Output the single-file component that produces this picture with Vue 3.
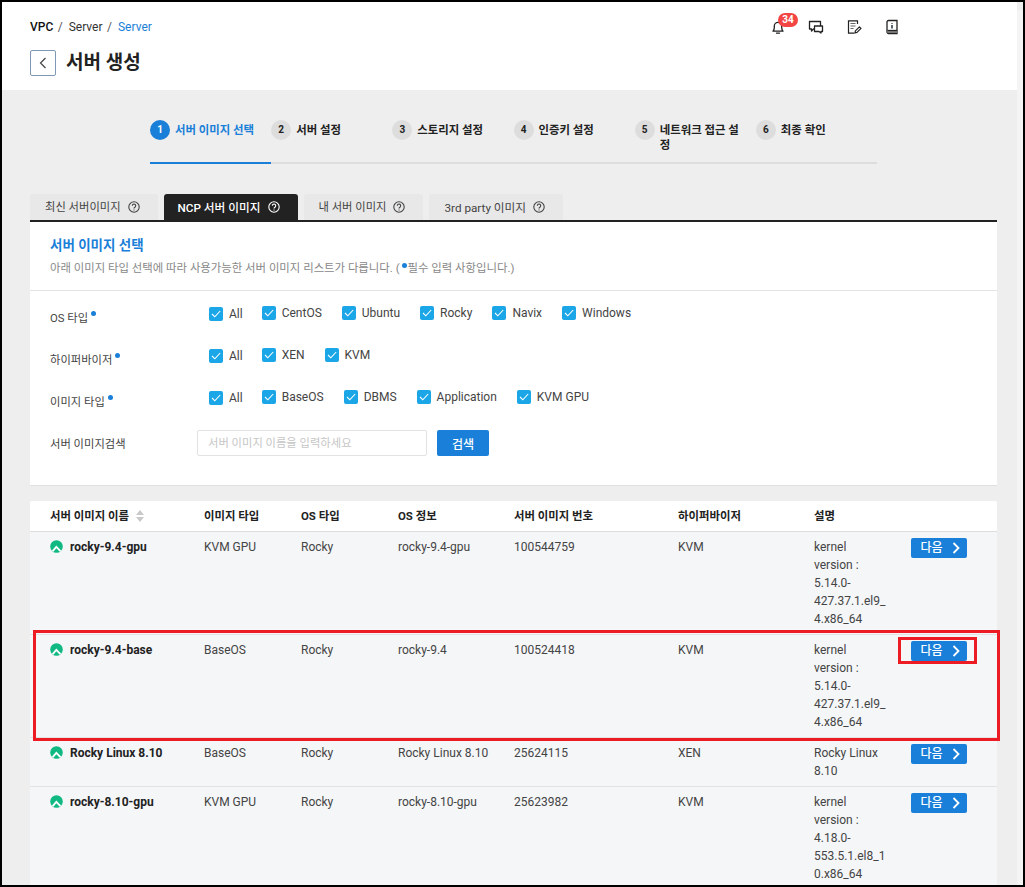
<script setup>
const steps = [
  { n: 1, label: '서버 이미지 선택', active: true },
  { n: 2, label: '서버 설정' },
  { n: 3, label: '스토리지 설정' },
  { n: 4, label: '인증키 설정' },
  { n: 5, label: '네트워크 접근 설정' },
  { n: 6, label: '최종 확인' }
]
const tabs = [
  { label: '최신 서버이미지' },
  { label: 'NCP 서버 이미지', active: true },
  { label: '내 서버 이미지' },
  { label: '3rd party 이미지', wide: true }
]
const filters = [
  { label: 'OS 타입', options: ['All', 'CentOS', 'Ubuntu', 'Rocky', 'Navix', 'Windows'] },
  { label: '하이퍼바이저', options: ['All', 'XEN', 'KVM'] },
  { label: '이미지 타입', options: ['All', 'BaseOS', 'DBMS', 'Application', 'KVM GPU'] }
]
const rows = [
  { name: 'rocky-9.4-gpu', type: 'KVM GPU', os: 'Rocky', info: 'rocky-9.4-gpu', no: '100544759', hv: 'KVM', desc: 'kernel version : 5.14.0-427.37.1.el9_4.x86_64' },
  { name: 'rocky-9.4-base', type: 'BaseOS', os: 'Rocky', info: 'rocky-9.4', no: '100524418', hv: 'KVM', desc: 'kernel version : 5.14.0-427.37.1.el9_4.x86_64' },
  { name: 'Rocky Linux 8.10', type: 'BaseOS', os: 'Rocky', info: 'Rocky Linux 8.10', no: '25624115', hv: 'XEN', desc: 'Rocky Linux 8.10' },
  { name: 'rocky-8.10-gpu', type: 'KVM GPU', os: 'Rocky', info: 'rocky-8.10-gpu', no: '25623982', hv: 'KVM', desc: 'kernel version : 4.18.0-553.5.1.el8_10.x86_64' }
]
</script>

<template>
  <div class="frame">
    <div class="main">
      <header class="top">
        <div class="top-row">
          <nav class="crumbs">
            <b>VPC</b><span class="sep">/</span><span>Server</span><span class="sep">/</span><span class="cur">Server</span>
          </nav>
          <div class="tools">
            <span class="tool bell">
              <svg width="16" height="16" viewBox="0 0 16 16" fill="none" stroke="#222" stroke-width="1.3">
                <path d="M3 12.2c1-1 1.3-2 1.3-3.7V7a3.7 3.7 0 0 1 7.4 0v1.500c0 1.700.3 2.700 1.300 3.700z" stroke-linejoin="round" />
                <path d="M6.500 14.200h3" stroke-linecap="round" />
              </svg>
              <span class="badge">34</span>
            </span>
            <span class="tool">
              <svg width="16" height="16" viewBox="0 0 16 16" fill="none" stroke="#222" stroke-width="1.300">
                <path d="M1.500 2.500h11v7.500H5.500L3.500 12v-2h-2z" stroke-linejoin="round" />
                <path d="M6.500 7h8v5.500h-1.500V14l-2-1.500H6.500z" fill="#fff" stroke-linejoin="round" />
              </svg>
            </span>
            <span class="tool">
              <svg width="16" height="16" viewBox="0 0 16 16" fill="none" stroke="#222" stroke-width="1.200">
                <path d="M11.500 5V1.800H2.500v12.400h6" />
                <path d="M4.500 4.500h5M4.500 7h5M4.500 9.500h3" stroke="#666" />
                <path d="M9 13.800l.4-2 4-4 1.600 1.600-4 4z" stroke-linejoin="round" />
              </svg>
            </span>
            <span class="tool">
              <svg width="16" height="16" viewBox="0 0 16 16" fill="none" stroke="#222" stroke-width="1.300">
                <path d="M3 12V3a1.500 1.500 0 0 1 1.500-1.500H13v13H4.500A1.500 1.500 0 0 1 3 13z" />
                <path d="M3.500 11.500H13" />
                <path d="M3.500 13h9.500" stroke="#777" stroke-width="2" />
                <path d="M8 4v.8M8 6v3.500" stroke="#123" stroke-width="1.400" />
              </svg>
            </span>
          </div>
        </div>
        <div class="title-row">
          <button class="back" type="button" aria-label="뒤로">
            <svg width="8" height="12" viewBox="0 0 8 12" fill="none" stroke="#444" stroke-width="1.200"><path d="M6.500 1L1.500 6l5 5" /></svg>
          </button>
          <h1>서버 생성</h1>
        </div>
      </header>

      <div class="content">
        <ol class="steps">
          <li v-for="s in steps" :key="s.n" class="step" :class="{ on: s.active }">
            <span class="num">{{ s.n }}</span>
            <span class="step-label">{{ s.label }}</span>
          </li>
        </ol>

        <div class="tabs">
          <div v-for="t in tabs" :key="t.label" class="tab" :class="{ on: t.active, wide: t.wide }">
            <span>{{ t.label }}</span>
            <svg width="12" height="12" viewBox="0 0 12 12" fill="none" stroke="currentColor" stroke-width="1.100">
              <circle cx="6" cy="6" r="5.200" />
              <path d="M4.300 4.700a1.700 1.700 0 1 1 2.600 1.500c-.6.400-.9.700-.9 1.300" />
              <path d="M6 8.500v1" />
            </svg>
          </div>
        </div>

        <section class="panel">
          <div class="panel-head">
            <h2>서버 이미지 선택</h2>
            <p>아래 이미지 타입 선택에 따라 사용가능한 서버 이미지 리스트가 다릅니다. (<i class="dot"></i>필수 입력 사항입니다.)</p>
          </div>
          <div class="form">
            <div v-for="f in filters" :key="f.label" class="form-row">
              <div class="form-label">{{ f.label }}<i class="dot"></i></div>
              <div class="opts">
                <label v-for="(o, i) in f.options" :key="o" class="opt" :class="{ first: i === 0 }">
                  <span class="check">
                    <svg width="14" height="14" viewBox="0 0 14 14" fill="none" stroke="#fff" stroke-width="1.100"><path d="M3 7l2.800 2.800L11.200 4" /></svg>
                  </span>
                  {{ o }}
                </label>
              </div>
            </div>
            <div class="search-row">
              <div class="form-label search-label">서버 이미지검색</div>
              <input class="search" type="text" placeholder="서버 이미지 이름을 입력하세요" />
              <button class="search-btn" type="button">검색</button>
            </div>
          </div>
        </section>

        <table class="list">
          <colgroup>
            <col style="width:154px" /><col style="width:97px" /><col style="width:97px" /><col style="width:116px" />
            <col style="width:164px" /><col style="width:136px" /><col style="width:97px" /><col />
          </colgroup>
          <thead>
            <tr>
              <th>
                서버 이미지 이름
                <svg class="sort" width="8" height="12" viewBox="0 0 8 12" fill="#c9c9c9"><path d="M4 0l4 5H0zM4 12L0 7h8z" /></svg>
              </th>
              <th>이미지 타입</th><th>OS 타입</th><th>OS 정보</th><th>서버 이미지 번호</th><th>하이퍼바이저</th><th>설명</th><th></th>
            </tr>
          </thead>
          <tbody>
            <tr v-for="r in rows" :key="r.name">
              <td class="name">
                <svg class="rocky" width="13" height="13" viewBox="0 0 13 13">
                  <circle cx="6.500" cy="6.500" r="6.300" fill="#10b981" />
                  <path d="M1.800 10.800L6.300 5.500l5 5.300-1.500 1L6.300 8.300 3.500 11.700z" fill="#fff" />
                </svg>
                <b>{{ r.name }}</b>
              </td>
              <td>{{ r.type }}</td>
              <td>{{ r.os }}</td>
              <td>{{ r.info }}</td>
              <td>{{ r.no }}</td>
              <td>{{ r.hv }}</td>
              <td class="desc">{{ r.desc }}</td>
              <td class="act">
                <button class="next" type="button">
                  다음
                  <svg width="8" height="12" viewBox="0 0 8 12" fill="none" stroke="#fff" stroke-width="1.800"><path d="M1.500 1l5 5-5 5" /></svg>
                </button>
              </td>
            </tr>
          </tbody>
        </table>
      </div>
    </div>
    <div class="rail"></div>

    <div class="mark mark-row"></div>
    <div class="mark mark-btn"></div>
  </div>
</template>

<style>
html, body { margin: 0; padding: 0; }
</style>

<style scoped>
* { box-sizing: border-box; }
.frame {
  position: relative;
  display: flex;
  width: 1025px;
  height: 887px;
  border: 2px solid #000;
  overflow: hidden;
  background: #eee;
  font-family: Roboto, "Noto Sans CJK KR", sans-serif;
  font-size: 12px;
  color: #333;
}
.main { width: 1015px; flex: none; }
.rail { flex: 1; background: #f4f4f4; margin-top: 8px; }
.top { height: 88px; background: #fff; padding: 0 117px 0 28px; }
.top-row { display: flex; align-items: center; justify-content: space-between; height: 50px; }
.crumbs { color: #333; display: flex; align-items: center; margin-top: -1px; }
.crumbs b { color: #111; font-weight: 500; }
.sep { margin: 0 6px 0 4.5px; color: #555; }
.cur { color: #1a7fd8; }
.tools { display: flex; gap: 22px; margin-top: -1px; }
.tool { width: 16px; height: 16px; display: block; position: relative; }
.tool svg { display: block; }
.badge {
  position: absolute;
  left: 8px;
  top: -6px;
  width: 20px;
  height: 14px;
  border-radius: 7px;
  background: #f44545;
  color: #fff;
  font-size: 10px;
  font-weight: 700;
  line-height: 14px;
  text-align: center;
}
.title-row { display: flex; align-items: center; gap: 10px; height: 28px; margin-top: -3px; }
.back {
  width: 26px;
  height: 26px;
  padding: 0;
  background: #fff;
  border: 1px solid #7f98b5;
  border-radius: 2px;
  display: flex;
  align-items: center;
  justify-content: center;
}
h1 { margin: 0; font-size: 19px; font-weight: 700; color: #222; line-height: 28px; }

.content { padding: 0 20px 0 28px; }
.steps {
  list-style: none;
  margin: 0 0 30px 120px;
  padding: 30px 0 0;
  display: flex;
  width: 727px;
}
.step {
  flex: 1 1 0;
  display: flex;
  gap: 5px;
  height: 44px;
  padding-right: 16px;
  border-bottom: 2px solid #ddd;
  font-weight: 500;
  color: #222;
}
.step.on { border-bottom-color: #1a7fd8; color: #1a7fd8; }
.num {
  flex: none;
  width: 20px;
  height: 20px;
  border-radius: 50%;
  background: #ddd;
  color: #222;
  font-size: 10px;
  font-weight: 700;
  line-height: 20px;
  text-align: center;
}
.step.on .num { background: #1a7fd8; color: #fff; }
.step-label { padding-top: 3px; line-height: 15px; word-break: break-all; min-width: 0; font-weight: 700; font-size: 11.4px; }

.tabs { display: flex; gap: 6px; }
.tab {
  height: 26px;
  padding: 0 18px 2px 15px;
  display: flex;
  align-items: center;
  gap: 7px;
  background: #e8e8e8;
  border-radius: 3px 3px 0 0;
  color: #444;
  font-size: 11.3px;
}
.tab svg { margin-top: 1px; }
.tab.wide { font-size: 11.7px; }
.tab.on { background: #222; color: #fff; font-weight: 500; padding-left: 14px; font-size: 11.7px; }

.panel { background: #fff; border-top: 2px solid #222; border-bottom: 1px solid #e0e0e0; height: 266px; }
.panel-head { height: 69px; padding: 14px 20px 0; border-bottom: 1px solid #e3e3e3; }
h2 { margin: 0; font-size: 13.500px; font-weight: 700; color: #1a7fd8; line-height: 18px; }
.panel-head p { margin: 5px 0 0; color: #888; line-height: 18px; font-size: 11.4px; }
.dot {
  display: inline-block;
  width: 5px;
  height: 5px;
  border-radius: 50%;
  background: #1a7fd8;
  margin: 0 1px 0 3px;
  vertical-align: 6px;
}
.panel-head .dot { vertical-align: 4px; margin-left: 2px; }
.form { padding: 13px 20px 0; }
.form-row { display: flex; height: 42px; }
.form-label { width: 159px; flex: none; padding-top: 6px; line-height: 18px; color: #444; font-size: 11.3px; }
.opts { display: flex; gap: 20px; padding-top: 2px; }
.opt { display: flex; align-items: flex-start; gap: 6px; line-height: 14px; color: #444; height: 18px; }
.opt.first { padding-top: 1px; margin-right: -1px; }
.check { width: 14px; height: 14px; background: #1ba6e8; border-radius: 2px; display: block; flex: none; }
.check svg { display: block; }
.search-row { display: flex; align-items: flex-start; }
.search-label { width: 147px; padding-top: 6px; }
.search {
  width: 230px;
  height: 26px;
  border: 1px solid #e2e2e2;
  border-radius: 2px;
  padding: 0 10px;
  font: inherit;
  font-size: 11.3px;
  outline: none;
}
.search::placeholder { color: #c6c6c6; }
.search-btn {
  width: 52px;
  height: 26px;
  margin-left: 10px;
  background: #1a7fd8;
  border: 0;
  border-radius: 2px;
  color: #fff;
  font: inherit;
  font-weight: 500;
}

.list {
  width: 967px;
  margin-top: 15px;
  border-collapse: separate;
  border-spacing: 0;
  table-layout: fixed;
  background: #f5f6f8;
}
.list th {
  height: 31px;
  padding: 0 5px 2px 20px;
  background: #fff;
  border-bottom: 1px solid #ddd;
  text-align: left;
  font-weight: 700;
  font-size: 11.4px;
  color: #222;
}
.list th:first-child { border-radius: 3px 0 0 0; }
.list th:last-child { border-radius: 0 3px 0 0; }
.sort { margin-left: 4px; vertical-align: -2px; }
.list td {
  padding: 6px 5px 6px 20px;
  border-bottom: 1px solid #e2e2e2;
  vertical-align: top;
  line-height: 18px;
  color: #444;
}
.list td.name { white-space: nowrap; padding-right: 0; }
.rocky { vertical-align: -2px; margin-right: 7px; }
.name b { color: #222; font-weight: 700; }
.desc { overflow-wrap: break-word; }
.list td.act { padding: 6px 0 0 20px; }
.next {
  width: 56px;
  height: 20px;
  padding: 0 0 0 2px;
  background: #1a7fd8;
  border: 0;
  border-radius: 2px;
  color: #fff;
  font: inherit;
  font-weight: 500;
  display: flex;
  align-items: center;
  justify-content: center;
  gap: 9px;
}

.mark { position: absolute; border: 3px solid #ed1c24; pointer-events: none; }
.mark-row { left: 31px; top: 628px; width: 967px; height: 111px; }
.mark-btn { left: 896px; top: 635px; width: 79px; height: 27px; }
</style>
